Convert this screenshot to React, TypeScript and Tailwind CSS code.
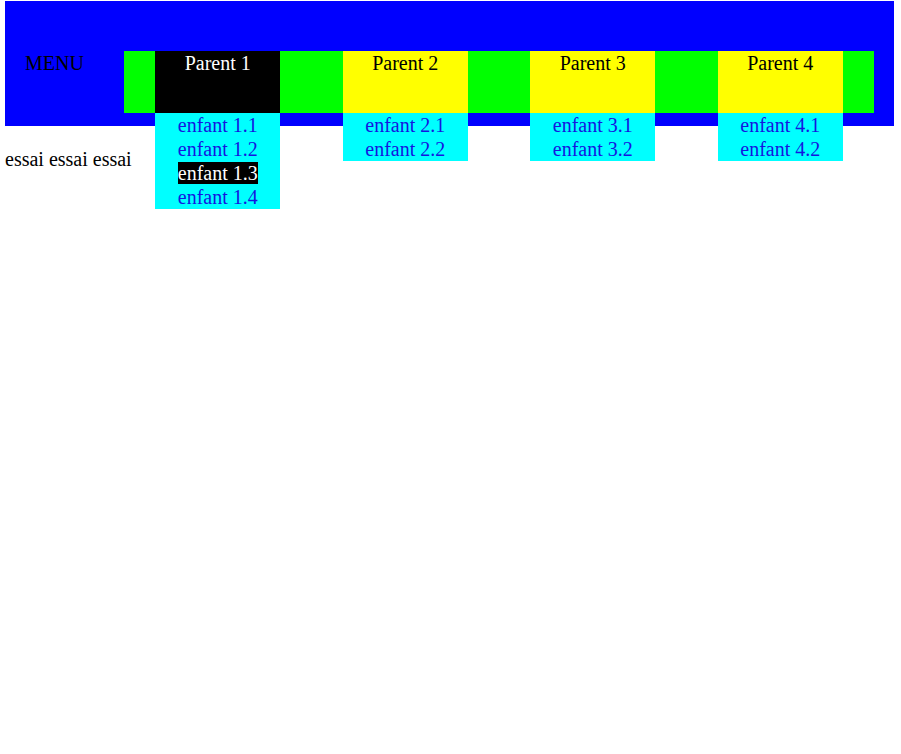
import React from "react";

const menus = [
  { label: "Parent 1", active: true, children: ["enfant 1.1", "enfant 1.2", "enfant 1.3", "enfant 1.4"], hovered: 2 },
  { label: "Parent 2", active: false, children: ["enfant 2.1", "enfant 2.2"], hovered: -1 },
  { label: "Parent 3", active: false, children: ["enfant 3.1", "enfant 3.2"], hovered: -1 },
  { label: "Parent 4", active: false, children: ["enfant 4.1", "enfant 4.2"], hovered: -1 },
];

export default function App() {
  return (
    <div className="min-h-screen bg-white pl-[5px] pt-[1px] font-['Liberation_Serif',serif] text-[20px] leading-[23px] text-black">
      <div className="flex h-[125px] w-[889px] bg-[#0000ff]">
        <div className="w-[119px] pl-[20px] pt-[51px]">MENU</div>
        <ul className="mt-[50px] flex h-[62px] w-[750px] bg-[#00ff00]">
          {menus.map((m) => (
            <li key={m.label} className="flex w-[187.5px] justify-center">
              <div
                className={
                  m.active
                    ? "relative h-full w-[125px] bg-black pt-[1px] text-center text-white"
                    : "relative h-full w-[125px] bg-[#ffff00] pt-[1px] text-center text-black"
                }
              >
                {m.label}
                <ul className="absolute left-0 top-full w-full bg-[#00ffff] text-center">
                  {m.children.map((c, i) => (
                    <li key={c} className="h-[24px] leading-[24px]">
                      {i === m.hovered ? (
                        <span className="bg-black text-white">{c}</span>
                      ) : (
                        <span className="text-[#1515e0]">{c}</span>
                      )}
                    </li>
                  ))}
                </ul>
              </div>
            </li>
          ))}
        </ul>
      </div>
      <p className="mt-[22px]">essai essai essai</p>
    </div>
  );
}
